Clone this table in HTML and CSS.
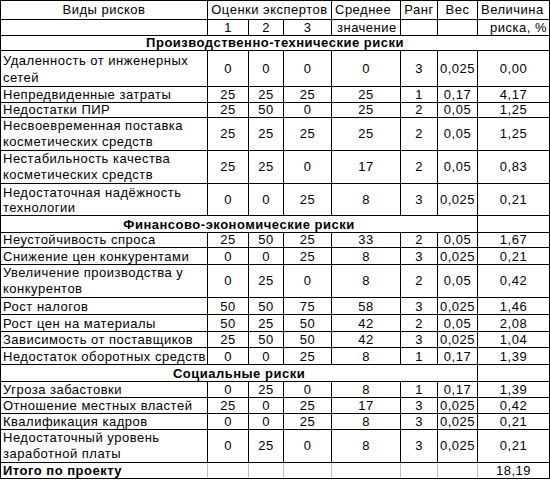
FILE: index.html
```html
<!DOCTYPE html>
<html lang="ru">
<head>
<meta charset="utf-8">
<title>Виды рисков</title>
<link rel="stylesheet" href="styles.css">
</head>
<body>
<table class="risk">
  <colgroup>
    <col class="c-name"><col class="c-e1"><col class="c-e2"><col class="c-e3"><col class="c-avg"><col class="c-rank"><col class="c-w"><col class="c-val">
  </colgroup>
  <tbody>
    <tr class="p19">
      <td class="ctr">Виды рисков</td>
      <td class="ctr" colspan="3">Оценки экспертов</td>
      <td class="lft">Среднее</td>
      <td class="ctr">Ранг</td>
      <td class="ctr">Вес</td>
      <td class="lft">Величина</td>
    </tr>
    <tr class="p16">
      <td></td>
      <td>1</td><td>2</td><td>3</td>
      <td class="lft pad">значение</td>
      <td></td><td></td>
      <td class="rgt">риска, %</td>
    </tr>
    <tr class="p15 sec"><td colspan="8">Производственно-технические риски</td></tr>
    <tr class="p36"><td class="name">Удаленность от инженерных<br>сетей</td><td>0</td><td>0</td><td>0</td><td>0</td><td>3</td><td>0,025</td><td>0,00</td></tr>
    <tr class="p16"><td class="name">Непредвиденные затраты</td><td>25</td><td>25</td><td>25</td><td>25</td><td>1</td><td>0,17</td><td>4,17</td></tr>
    <tr class="p15"><td class="name">Недостатки ПИР</td><td>25</td><td>50</td><td>0</td><td>25</td><td>2</td><td>0,05</td><td>1,25</td></tr>
    <tr class="p33"><td class="name">Несвоевременная поставка<br>косметических средств</td><td>25</td><td>25</td><td>25</td><td>25</td><td>2</td><td>0,05</td><td>1,25</td></tr>
    <tr class="p33"><td class="name">Нестабильность качества<br>косметических средств</td><td>25</td><td>25</td><td>0</td><td>17</td><td>2</td><td>0,05</td><td>0,83</td></tr>
    <tr class="p32"><td class="name">Недостаточная надёжность<br>технологии</td><td>0</td><td>0</td><td>25</td><td>8</td><td>3</td><td>0,025</td><td>0,21</td></tr>
    <tr class="p17 sec"><td colspan="7">Финансово-экономические риски</td><td></td></tr>
    <tr class="p15"><td class="name">Неустойчивость спроса</td><td>25</td><td>50</td><td>25</td><td>33</td><td>2</td><td>0,05</td><td>1,67</td></tr>
    <tr class="p17"><td class="name">Снижение цен конкурентами</td><td>0</td><td>0</td><td>25</td><td>8</td><td>3</td><td>0,025</td><td>0,21</td></tr>
    <tr class="p33"><td class="name">Увеличение производства у<br>конкурентов</td><td>0</td><td>25</td><td>0</td><td>8</td><td>2</td><td>0,05</td><td>0,42</td></tr>
    <tr class="p17"><td class="name">Рост налогов</td><td>50</td><td>50</td><td>75</td><td>58</td><td>3</td><td>0,025</td><td>1,46</td></tr>
    <tr class="p17"><td class="name">Рост цен на материалы</td><td>50</td><td>25</td><td>50</td><td>42</td><td>2</td><td>0,05</td><td>2,08</td></tr>
    <tr class="p16"><td class="name">Зависимость от поставщиков</td><td>25</td><td>50</td><td>50</td><td>42</td><td>3</td><td>0,025</td><td>1,04</td></tr>
    <tr class="p17"><td class="name">Недостаток оборотных средств</td><td>0</td><td>0</td><td>25</td><td>8</td><td>1</td><td>0,17</td><td>1,39</td></tr>
    <tr class="p17 sec"><td colspan="7">Социальные риски</td><td></td></tr>
    <tr class="p16"><td class="name">Угроза забастовки</td><td>0</td><td>25</td><td>0</td><td>8</td><td>1</td><td>0,17</td><td>1,39</td></tr>
    <tr class="p16"><td class="name">Отношение местных властей</td><td>25</td><td>0</td><td>25</td><td>17</td><td>3</td><td>0,025</td><td>0,42</td></tr>
    <tr class="p16"><td class="name">Квалификация кадров</td><td>0</td><td>0</td><td>25</td><td>8</td><td>3</td><td>0,025</td><td>0,21</td></tr>
    <tr class="p33"><td class="name">Недостаточный уровень<br>заработной платы</td><td>0</td><td>25</td><td>0</td><td>8</td><td>3</td><td>0,025</td><td>0,21</td></tr>
    <tr class="p16 total"><td class="name">Итого по проекту</td><td></td><td></td><td></td><td></td><td></td><td></td><td>18,19</td></tr>
  </tbody>
</table>
</body>
</html>
```

FILE: styles.css
```css
html, body {
  margin: 0;
  padding: 0;
  background: #ffffff;
}

.risk {
  border-collapse: collapse;
  table-layout: fixed;
  width: 549px;
  font-family: "Liberation Sans", Arial, sans-serif;
  font-size: 13px;
  letter-spacing: 0.5px;
  color: #000;
}

.c-name { width: 207px; }
.c-e1 { width: 41px; }
.c-e2 { width: 35px; }
.c-e3 { width: 48px; }
.c-avg { width: 69px; }
.c-rank { width: 37px; }
.c-w { width: 40px; }
.c-val { width: 72px; }

.risk td {
  border: 1px solid #000;
  padding: 0;
  text-align: center;
  vertical-align: middle;
  white-space: nowrap;
  overflow: hidden;
  line-height: 15px;
}

.p15 td { height: 14px; line-height: 14px; }
.p16 td { height: 15px; }
.p17 td { height: 16px; }
.p19 td { height: 18px; line-height: 18px; }
.p32 td { height: 31px; }
.p33 td { height: 32px; line-height: 16px; }
.p36 td { height: 35px; line-height: 17px; }

.risk td.name {
  text-align: left;
  padding-left: 2px;
}

.risk td.lft { text-align: left; padding-left: 3px; }
.risk td.pad { padding-left: 5px; }
.risk td.rgt { text-align: right; padding-right: 2px; }

.sec td { font-weight: bold; letter-spacing: 0.5px; }

.total td.name { font-weight: bold; }
.total td { border-left-color: #c0c0c0; border-right-color: #c0c0c0; }
.total td:first-child { border-left-color: #000; }
.total td:last-child { border-left-color: #000; border-right-color: #000; }
```
